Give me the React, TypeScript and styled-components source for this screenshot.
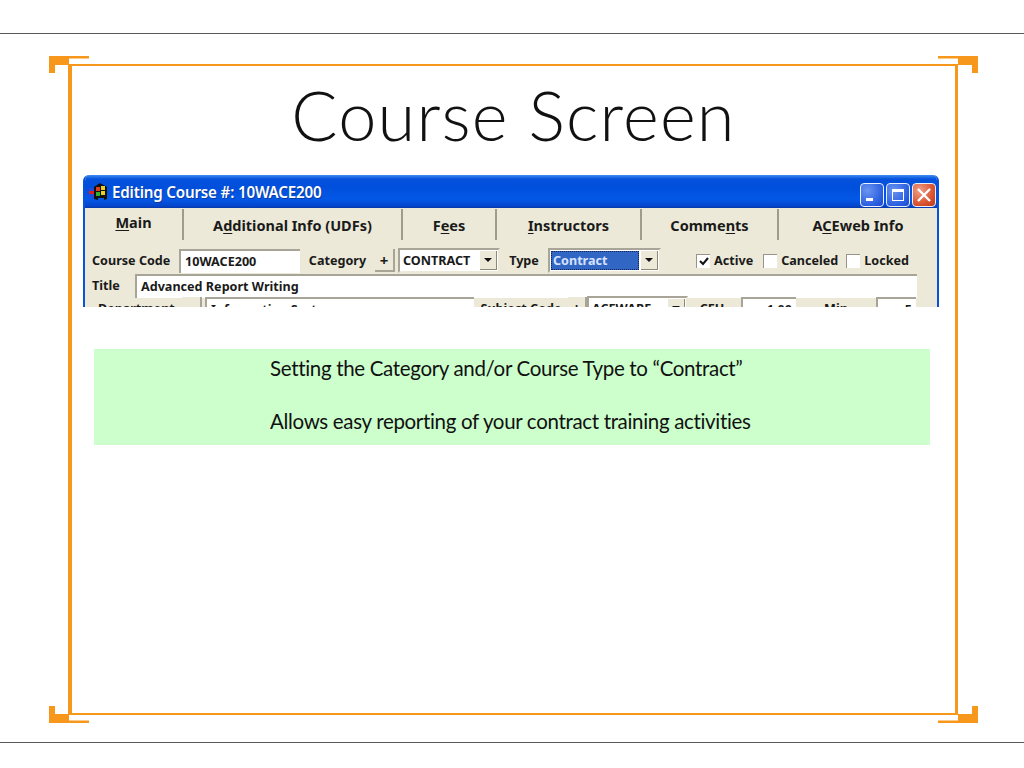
import React from "react";
import styled, { createGlobalStyle } from "styled-components";

const GlobalStyle = createGlobalStyle`
  html, body {
    margin: 0;
    padding: 0;
    background: #ffffff;
  }
`;

const Page = styled.div`
  width: 1024px;
  height: 768px;
  overflow: hidden;
  display: flex;
  flex-direction: column;
  box-sizing: border-box;
  padding-top: 33px;
`;

const Rule = styled.div`
  height: 1px;
  background: #5a5a5a;
  flex: none;
`;

const Frame = styled.div`
  position: relative;
  box-sizing: border-box;
  width: 890px;
  height: 651px;
  margin: 30px 0 27px 68px;
  border: solid #f7981d;
  border-width: 2px 3px 2px 4px;
  flex: none;
  display: flex;
  flex-direction: column;
`;

const Corner = styled.svg<{ $x: "left" | "right"; $y: "top" | "bottom" }>`
  position: absolute;
  width: 40px;
  height: 17px;
  ${(p) => (p.$x === "left" ? "left: -23px;" : "right: -23px;")}
  ${(p) => (p.$y === "top" ? "top: -10px;" : "bottom: -10px;")}
  transform: scale(${(p) => (p.$x === "left" ? 1 : -1)}, ${(p) => (p.$y === "top" ? 1 : -1)});
`;

const Title = styled.h1`
  margin: 0;
  height: 109px;
  padding: 9px 0 0;
  box-sizing: border-box;
  text-align: center;
  font-family: "Lato", "Liberation Sans", sans-serif;
  font-weight: 300;
  font-size: 68.5px;
  line-height: 80px;
  letter-spacing: 1.2px;
  color: #111111;
`;

const Window = styled.div`
  box-sizing: border-box;
  width: 856px;
  height: 132px;
  margin-left: 11px;
  overflow: hidden;
  flex: none;
  border-radius: 6px 6px 0 0;
  border: solid #0a52dc;
  border-width: 0 2px;
  background: #ece9d8;
  font-family: "Noto Sans", "DejaVu Sans", sans-serif;
  font-weight: 700;
  color: #1a1a1a;
`;

const TitleBar = styled.div`
  height: 33px;
  margin: 0 -2px;
  padding: 0 3px 0 6px;
  display: flex;
  align-items: center;
  gap: 4px;
  background: linear-gradient(#3f8cf3 0, #0552dc 4px, #004fdc 12px, #0458e6 24px, #0446cc 31px, #0838a8 33px);
`;

const AppIcon = styled.svg`
  width: 19px;
  height: 18px;
  flex: none;
`;

const WindowTitle = styled.span`
  flex: 1;
  color: #ffffff;
  font-size: 15.2px;
  letter-spacing: -0.2px;
  font-weight: 600;
  text-shadow: 1px 1px 0 #0a3aa0;
`;

const WinButtons = styled.div`
  display: flex;
  gap: 2px;
  align-self: flex-end;
  padding-bottom: 1px;
`;

const WinButton = styled.div<{ $close?: boolean }>`
  box-sizing: border-box;
  width: 24px;
  height: 24px;
  border: 1px solid #e8f0ff;
  border-radius: 4px;
  position: relative;
  background: ${(p) =>
    p.$close
      ? "radial-gradient(circle at 30% 30%, #f0a088, #d8502c 65%, #b83a18)"
      : "radial-gradient(circle at 30% 30%, #6a94f0, #2a5ee0 70%, #1c48c8)"};
`;

const GlyphSvg = styled.svg`
  position: absolute;
  inset: 0;
  width: 22px;
  height: 22px;
`;

const TabRow = styled.div`
  display: grid;
  grid-template-columns: 99px 219px 94px 145px 137px 1fr;
  height: 31px;
  margin-top: 1px;
`;

const Tab = styled.div<{ $active?: boolean; $last?: boolean }>`
  display: flex;
  align-items: center;
  justify-content: center;
  padding-bottom: ${(p) => (p.$active ? "5px" : "0")};
  font-size: 14.5px;
  font-weight: 700;
  border-right: ${(p) => (p.$last ? "none" : "2px solid #a09c8c")};
  box-sizing: border-box;
  u {
    text-underline-offset: 2px;
  }
`;

const Form = styled.div`
  padding: 8px 22px 0 7px;
  display: flex;
  flex-direction: column;
  font-size: 12.6px;
  font-weight: 700;
`;

const FormRow = styled.div<{ $h: number }>`
  display: flex;
  align-items: center;
  height: ${(p) => p.$h}px;
  flex: none;
`;

const Label = styled.span<{ $w: number; $pl?: number; $center?: boolean }>`
  width: ${(p) => p.$w}px;
  padding-left: ${(p) => p.$pl ?? 0}px;
  box-sizing: border-box;
  flex: none;
  white-space: nowrap;
  text-align: ${(p) => (p.$center ? "center" : "left")};
`;

const Input = styled.div<{ $w: number; $right?: boolean; $ml?: number }>`
  box-sizing: border-box;
  width: ${(p) => p.$w}px;
  height: 24px;
  margin-left: ${(p) => p.$ml ?? 0}px;
  flex: none;
  display: flex;
  align-items: center;
  justify-content: ${(p) => (p.$right ? "flex-end" : "flex-start")};
  padding: 0 4px;
  background: #ffffff;
  border: solid;
  border-width: 2px 0 0 2px;
  border-color: #a8a497 #ffffff #ffffff #a8a497;
  white-space: nowrap;
  overflow: hidden;
`;

const PlusButton = styled.div<{ $w?: number }>`
  box-sizing: border-box;
  width: ${(p) => p.$w ?? 20}px;
  height: 23px;
  flex: none;
  display: flex;
  align-items: center;
  justify-content: center;
  background: #ece9d8;
  border-right: 2px solid #a8a497;
  border-bottom: 2px solid #a8a497;
  font-size: 15px;
`;

const Combo = styled.div<{ $w: number; $ml?: number }>`
  box-sizing: border-box;
  width: ${(p) => p.$w}px;
  height: 25px;
  margin-left: ${(p) => p.$ml ?? 0}px;
  flex: none;
  display: flex;
  align-items: center;
  padding: 1px;
  background: #ffffff;
  border: 2px solid #a8a497;
  border-right-color: #ece9d8;
  border-bottom-color: #ece9d8;
`;

const ComboText = styled.div<{ $selected?: boolean }>`
  flex: 1;
  height: 100%;
  display: flex;
  align-items: center;
  padding-left: 2px;
  color: ${(p) => (p.$selected ? "#d6e2ff" : "#1a1a1a")};
  background: ${(p) => (p.$selected ? "#3166c4" : "transparent")};
  outline: ${(p) => (p.$selected ? "1px dotted #10204a" : "none")};
  outline-offset: -1px;
`;

const ComboArrow = styled.div`
  box-sizing: border-box;
  width: 17px;
  height: 100%;
  flex: none;
  margin-left: 2px;
  display: flex;
  align-items: center;
  justify-content: center;
  background: #ece9d8;
  border-right: 1px solid #8c8878;
  border-bottom: 1px solid #8c8878;
  &::after {
    content: "";
    border: solid transparent;
    border-width: 4px 4px 0;
    border-top-color: #111111;
  }
`;

const CheckItem = styled.div<{ $ml: number }>`
  display: flex;
  align-items: center;
  gap: 4px;
  margin-left: ${(p) => p.$ml}px;
  flex: none;
`;

const CheckBox = styled.div`
  box-sizing: border-box;
  width: 14px;
  height: 14px;
  flex: none;
  background: #ffffff;
  border: solid;
  border-width: 1px 0 0 1px;
  border-color: #98948a;
  display: flex;
  align-items: center;
  justify-content: center;
`;

const Note = styled.div`
  width: 836px;
  height: 96px;
  margin: 42px 0 0 22px;
  box-sizing: border-box;
  padding-left: 176px;
  flex: none;
  display: flex;
  flex-direction: column;
  gap: 15px;
  background: #ccffcc;
  font-family: "Lato", "Noto Sans", sans-serif;
  font-size: 20.5px;
  letter-spacing: -0.33px;
  line-height: 38px;
  color: #111111;
`;

const NoteLine = styled.div`
  white-space: nowrap;
`;

const cornerPath = "M0 0H40V2.5H20V9H6V17H0Z";

const corners: Array<["left" | "right", "top" | "bottom"]> = [
  ["left", "top"],
  ["right", "top"],
  ["left", "bottom"],
  ["right", "bottom"],
];

const tabs = [
  { key: "main", node: <><u>M</u>ain</>, active: true },
  { key: "info", node: <>A<u>d</u>ditional Info (UDFs)</> },
  { key: "fees", node: <>F<u>e</u>es</> },
  { key: "inst", node: <><u>I</u>nstructors</> },
  { key: "comm", node: <>Comme<u>n</u>ts</> },
  { key: "web", node: <>A<u>C</u>Eweb Info</> },
];

const App: React.FunctionComponent = () => {
  return (
    <Page>
      <GlobalStyle />
      <Rule />
      <Frame>
        {corners.map(([x, y]) => (
          <Corner key={x + y} $x={x} $y={y} viewBox="0 0 40 17">
            <path d={cornerPath} fill="#f7981d" />
          </Corner>
        ))}
        <Title>Course Screen</Title>
        <Window>
          <TitleBar>
            <AppIcon viewBox="0 0 19 18">
              <rect x="0" y="5" width="6" height="3" fill="#2848d8" />
              <rect x="0" y="8" width="6" height="3" fill="#d82020" />
              <rect x="0" y="11" width="6" height="3" fill="#2848d8" />
              <path d="M5 16V4L11 0L18 4V16L15 17V15H9V17Z" fill="#111111" />
              <rect x="7" y="4" width="4" height="4" fill="#e04020" />
              <rect x="12" y="3" width="4" height="4" fill="#e8d020" />
              <rect x="7" y="9" width="4" height="4" fill="#30b030" />
              <rect x="12" y="8" width="4" height="4" fill="#e8d020" />
            </AppIcon>
            <WindowTitle>Editing Course #: 10WACE200</WindowTitle>
            <WinButtons>
              <WinButton>
                <GlyphSvg viewBox="0 0 22 22">
                  <rect x="5" y="14" width="7" height="3" fill="#ffffff" />
                </GlyphSvg>
              </WinButton>
              <WinButton>
                <GlyphSvg viewBox="0 0 22 22">
                  <rect x="5.5" y="5.5" width="11" height="11" fill="none" stroke="#ffffff" />
                  <rect x="5" y="5" width="12" height="3" fill="#ffffff" />
                </GlyphSvg>
              </WinButton>
              <WinButton $close>
                <GlyphSvg viewBox="0 0 22 22">
                  <path d="M5 5L17 17M17 5L5 17" stroke="#ffffff" strokeWidth="2.4" />
                </GlyphSvg>
              </WinButton>
            </WinButtons>
          </TitleBar>
          <TabRow>
            {tabs.map((t, i) => (
              <Tab key={t.key} $active={t.active} $last={i === tabs.length - 1}>
                <span>{t.node}</span>
              </Tab>
            ))}
          </TabRow>
          <Form>
            <FormRow $h={25}>
              <Label $w={87}>Course Code</Label>
              <Input $w={121}>10WACE200</Input>
              <Label $w={75} $center>Category</Label>
              <PlusButton>+</PlusButton>
              <Combo $w={102} $ml={3}>
                <ComboText>CONTRACT</ComboText>
                <ComboArrow />
              </Combo>
              <Label $w={48} $center>Type</Label>
              <Combo $w={113}>
                <ComboText $selected>Contract</ComboText>
                <ComboArrow />
              </Combo>
              <CheckItem $ml={35}>
                <CheckBox>
                  <svg width="10" height="10" viewBox="0 0 10 10">
                    <path d="M1 5L4 8L9 2" fill="none" stroke="#111" strokeWidth="2" />
                  </svg>
                </CheckBox>
                Active
              </CheckItem>
              <CheckItem $ml={10}>
                <CheckBox />
                Canceled
              </CheckItem>
              <CheckItem $ml={8}>
                <CheckBox />
                Locked
              </CheckItem>
            </FormRow>
            <FormRow $h={25}>
              <Label $w={43}>Title</Label>
              <Input $w={782}>Advanced Report Writing</Input>
            </FormRow>
            <FormRow $h={21}>
              <Label $w={90} $pl={6}>Department</Label>
              <PlusButton />
              <Input $w={269} $ml={3}>Information Systems</Input>
              <Label $w={94} $center>Subject Code</Label>
              <PlusButton $w={19}>+</PlusButton>
              <Combo $w={101}>
                <ComboText>ACEWARE</ComboText>
                <ComboArrow />
              </Combo>
              <Label $w={48} $center>CEU</Label>
              <Input $w={55} $ml={5} $right>1.00</Input>
              <Label $w={80} $center>Min</Label>
              <Input $w={40} $right>5</Input>
            </FormRow>
          </Form>
        </Window>
        <Note>
          <NoteLine>Setting the Category and/or Course Type to “Contract”</NoteLine>
          <NoteLine>Allows easy reporting of your contract training activities</NoteLine>
        </Note>
      </Frame>
      <Rule />
    </Page>
  );
};

export default App;
